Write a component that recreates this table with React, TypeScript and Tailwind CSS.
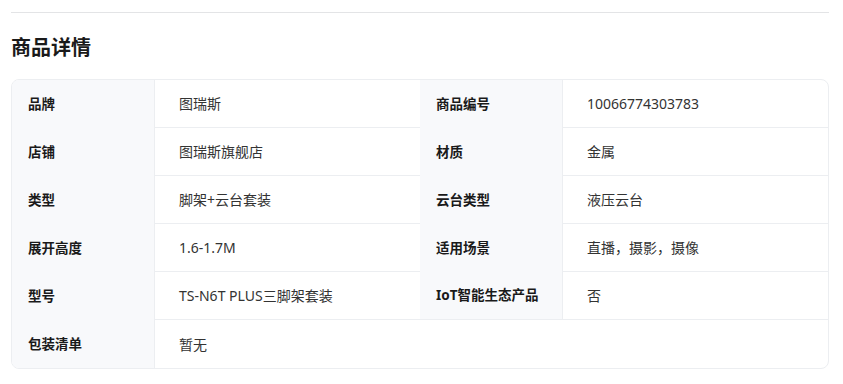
const rows: [string, string, string?, string?][] = [
  ["品牌", "图瑞斯", "商品编号", "10066774303783"],
  ["店铺", "图瑞斯旗舰店", "材质", "金属"],
  ["类型", "脚架+云台套装", "云台类型", "液压云台"],
  ["展开高度", "1.6-1.7M", "适用场景", "直播，摄影，摄像"],
  ["型号", "TS-N6T PLUS三脚架套装", "IoT智能生态产品", "否"],
  ["包装清单", "暂无"],
];

const label = "flex h-[48px] items-center border-r border-[#eceef1] bg-[#f8f9fb] pl-4 text-[13.5px] font-bold text-[#1a1a1a]";
const value = "flex h-[48px] items-center pl-6 text-[14px] text-[#333]";

export default function App() {
  return (
    <div className="min-h-screen bg-white pl-[11px] pr-[14px] pt-3 font-['Noto_Sans','Noto_Sans_CJK_SC',sans-serif]">
      <div className="border-t border-[#e3e4e6]" />
      <h2 className="mt-[20px] text-[20px] leading-[28px] font-bold text-[#1a1a1a] font-['Noto_Sans_CJK_SC',sans-serif]">
        商品详情
      </h2>

      <div className="mt-[18px] grid grid-cols-[143px_265px_143px_1fr] overflow-hidden rounded-lg border border-[#eceef1]">
        {rows.map(([l1, v1, l2, v2], i) => {
          if (i === rows.length - 1) {
            return (
              <div key={i} className="contents">
                <div className={label}>{l1}</div>
                <div className={`${value} col-span-3`}>{v1}</div>
              </div>
            );
          }
          return (
            <div key={i} className="contents">
              <div className={label}>{l1}</div>
              <div className={`${value} border-b border-[#eceef1]`}>{v1}</div>
              <div className={`${label} ${i === rows.length - 2 ? "border-b" : ""}`}>{l2}</div>
              <div className={`${value} border-b border-[#eceef1]`}>{v2}</div>
            </div>
          );
        })}
      </div>
    </div>
  );
}
